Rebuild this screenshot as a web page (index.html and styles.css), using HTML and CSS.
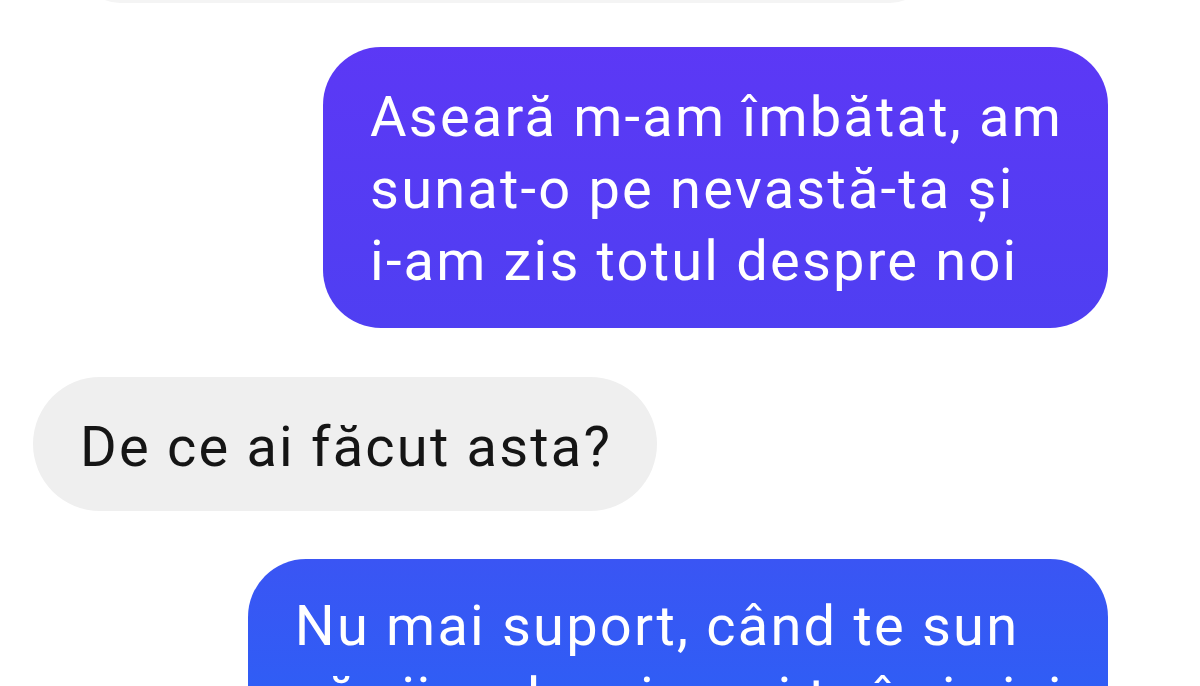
FILE: index.html
```html
<!DOCTYPE html>
<html lang="ro">
<head>
<meta charset="utf-8">
<title>Chat</title>
<link rel="stylesheet" href="styles.css">
</head>
<body>
<main class="chat">
  <div class="msg msg-prev"></div>
  <div class="row row-out">
    <div class="msg msg-out msg-first">Aseară m-am îmbătat, am<br>sunat-o pe nevastă-ta și<br>i-am zis totul despre noi</div>
  </div>
  <div class="row row-in">
    <div class="msg msg-in">De ce ai făcut asta?</div>
  </div>
  <div class="row row-out">
    <div class="msg msg-out msg-last">Nu mai suport, când te sun<br><span class="tight">să vii pe la mine, și tu îmi zici</span></div>
  </div>
</main>
</body>
</html>
```

FILE: styles.css
```css
html, body {
  margin: 0;
  padding: 0;
  background: #ffffff;
  height: 686px;
  overflow: hidden;
}

.chat {
  display: flex;
  flex-direction: column;
  font-family: Roboto, "Noto Sans", "Liberation Sans", sans-serif;
  font-size: 56px;
  line-height: 72px;
  letter-spacing: 2.2px;
  padding: 0 92px 0 33px;
}

.row {
  display: flex;
}

.row-out {
  justify-content: flex-end;
}

.row-in {
  justify-content: flex-start;
}

.msg {
  padding: 34px 45px 28px 47px;
  border-radius: 58px;
  white-space: nowrap;
}

.msg-prev {
  align-self: flex-start;
  margin: -97px 0 0 47px;
  width: 850px;
  height: 100px;
  background: #f4f4f4;
  border-radius: 40px;
  padding: 0;
}

.msg-out {
  color: #ffffff;
  background: linear-gradient(to bottom, #5e37f6 0px, #4f3ff2 330px, #3a55f4 560px, #305df5 686px);
  background-attachment: fixed;
}

.msg-first {
  margin-top: 44px;
  padding-bottom: 31px;
}

.msg-in {
  margin-top: 49px;
  color: #151515;
  background: #efefef;
  border-radius: 67px;
}

.msg-last {
  margin-top: 48px;
  padding-top: 31px;
}

.tight {
  letter-spacing: 1.55px;
}
```
